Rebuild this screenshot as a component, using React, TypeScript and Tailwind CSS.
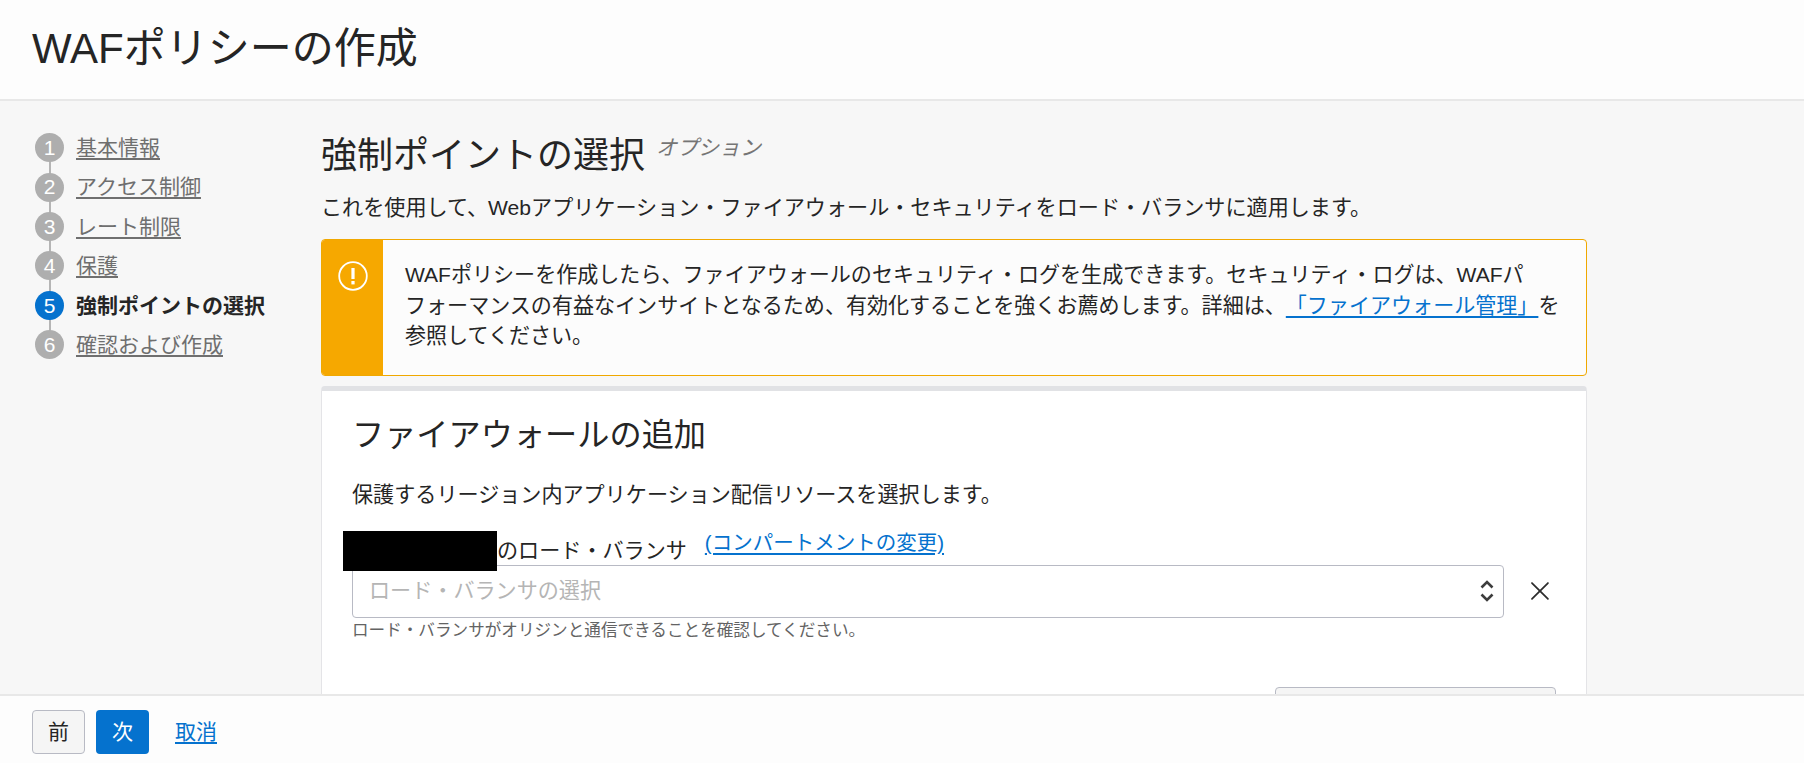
import { X } from "lucide-react";

const steps = [
  { n: 1, label: "基本情報" },
  { n: 2, label: "アクセス制御" },
  { n: 3, label: "レート制限" },
  { n: 4, label: "保護" },
  { n: 5, label: "強制ポイントの選択", active: true },
  { n: 6, label: "確認および作成" },
];

function StepList() {
  return (
    <ol className="relative w-[321px] shrink-0 pl-[35px] pt-[27px]">
      <div className="absolute left-[49px] top-[45px] h-[195px] w-[2px] bg-[#b5b5b5]" />
      {steps.map((s) => (
        <li key={s.n} className="relative flex h-[39.4px] items-center">
          <span
            className={
              s.active
                ? "flex h-[29px] w-[29px] items-center justify-center rounded-full bg-[#0572ce] text-[21px] text-white"
                : "flex h-[29px] w-[29px] items-center justify-center rounded-full bg-[#aeaeae] text-[21px] text-white"
            }
          >
            {s.n}
          </span>
          {s.active ? (
            <span className="ml-[12px] text-[21px] font-bold text-[#252525]">{s.label}</span>
          ) : (
            <a className="ml-[12px] text-[21px] text-[#6f6f6f] underline decoration-[2px] underline-offset-[3px]">
              {s.label}
            </a>
          )}
        </li>
      ))}
    </ol>
  );
}

function AlertBox() {
  return (
    <div className="flex h-[137px] w-[1266px] overflow-hidden rounded-[4px] border border-[#f0a800] bg-[#fcfcfc]">
      <div className="flex w-[61px] shrink-0 justify-center bg-[#f6a800] pt-[21px]">
        <svg width="30" height="30" viewBox="0 0 30 30" fill="none">
          <circle cx="15" cy="15" r="13.8" stroke="#fff" strokeWidth="1.8" />
          <rect x="13.4" y="7" width="3.2" height="11" fill="#fff" />
          <rect x="13.4" y="20" width="3.2" height="3.4" fill="#fff" />
        </svg>
      </div>
      <p className="w-[1190px] pl-[22px] pt-[20px] text-[21.05px] leading-[30.6px] text-[#252525] [text-spacing-trim:space-all]">
        WAFポリシーを作成したら、ファイアウォールのセキュリティ・ログを生成できます。セキュリティ・ログは、WAFパ
        <br />
        フォーマンスの有益なインサイトとなるため、有効化することを強くお薦めします。詳細は、
        <a className="text-[#0572ce] underline decoration-[2px] underline-offset-[3px]">「ファイアウォール管理」</a>
        を
        <br />
        参照してください。
      </p>
    </div>
  );
}

function FirewallCard() {
  return (
    <section className="mt-[10px] w-[1266px] rounded-t-[4px] border-x border-t-[5px] border-x-[#e4e4e7] border-t-[#e1e2e5] bg-white pb-[40px] pl-[30px] pr-[30px] pt-[20px]">
      <h2 className="text-[32.2px] font-normal leading-[48px] text-[#252525]">ファイアウォールの追加</h2>
      <p className="mt-[21px] text-[21.1px] leading-[30px] text-[#252525]">
        保護するリージョン内アプリケーション配信リソースを選択します。
      </p>
      <div className="relative mt-[24px] flex h-[30px] items-center text-[21.1px] text-[#252525]">
        <span className="absolute left-[-9px] top-[-3px] h-[40px] w-[154px] bg-black" />
        <span className="ml-[145px] pt-[3px]">のロード・バランサ</span>
        <a className="ml-[18px] -translate-y-[6px] text-[20.5px] text-[#0572ce] underline decoration-[2px] underline-offset-[3px]">
          (コンパートメントの変更)
        </a>
      </div>
      <div className="mt-[1px] flex items-center">
        <div className="flex h-[53px] w-[1155px] items-center justify-between rounded-[4px] border border-[#b8bac4] bg-white pb-[2px] pl-[16px] pr-[8px]">
          <span className="text-[21.1px] text-[#b5b5b5]">ロード・バランサの選択</span>
          <svg width="16" height="26" viewBox="0 0 16 26" fill="none" stroke="#3d3d3d" strokeWidth="2.6">
            <path d="M2.5 9.5 8 4l5.5 5.5" />
            <path d="M2.5 16.5 8 22l5.5-5.5" />
          </svg>
        </div>
        <X className="ml-[20px] -mt-[1px] h-[32px] w-[32px] text-[#2c2c2c]" strokeWidth={1.3} />
      </div>
      <p className="mt-[2px] text-[16.6px] leading-[22px] text-[#636363]">
        ロード・バランサがオリジンと通信できることを確認してください。
      </p>
      <div className="mt-[45px] flex justify-end">
        <div className="h-[50px] w-[281px] rounded-[4px] border border-[#b8bac4] bg-[#f5f5f5]" />
      </div>
    </section>
  );
}

export default function App() {
  return (
    <div
      className="flex h-[763px] w-[1804px] flex-col overflow-hidden bg-[#f7f7f7]"
      style={{ fontFamily: '"Liberation Sans", "Noto Sans CJK JP", sans-serif' }}
    >
      <header className="flex h-[101px] shrink-0 items-center border-b-2 border-[#e8e8e8] bg-[#fdfdfd] pb-[2px] pl-[32px]">
        <h1 className="text-[42px] font-normal text-[#252525]">WAFポリシーの作成</h1>
      </header>

      <div className="flex min-h-0 flex-1 overflow-hidden">
        <StepList />
        <main className="min-w-0 flex-1 pt-[32px]">
          <div className="flex items-start">
            <h2 className="text-[36px] font-normal leading-[46px] text-[#252525]">強制ポイントの選択</h2>
            <span className="-mt-[1px] ml-[11px] text-[21px] italic text-[#757575]">オプション</span>
          </div>
          <p className="mt-[14px] text-[21.1px] leading-[30px] text-[#252525]">
            これを使用して、Webアプリケーション・ファイアウォール・セキュリティをロード・バランサに適用します。
          </p>
          <div className="mt-[16px]">
            <AlertBox />
            <FirewallCard />
          </div>
        </main>
      </div>

      <footer className="flex h-[69px] shrink-0 items-center border-t-2 border-[#e8e8e8] bg-[#fdfdfd] pl-[32px] pt-[4px]">
        <button className="h-[44px] w-[53px] rounded-[4px] border border-[#b8bac4] bg-[#f5f5f5] text-[21px] text-[#252525]">
          前
        </button>
        <button className="ml-[11px] h-[44px] w-[53px] rounded-[4px] bg-[#0572ce] text-[21px] text-white">
          次
        </button>
        <a className="ml-[26px] text-[21px] text-[#0572ce] underline decoration-[2px] underline-offset-[3px]">取消</a>
      </footer>
    </div>
  );
}
